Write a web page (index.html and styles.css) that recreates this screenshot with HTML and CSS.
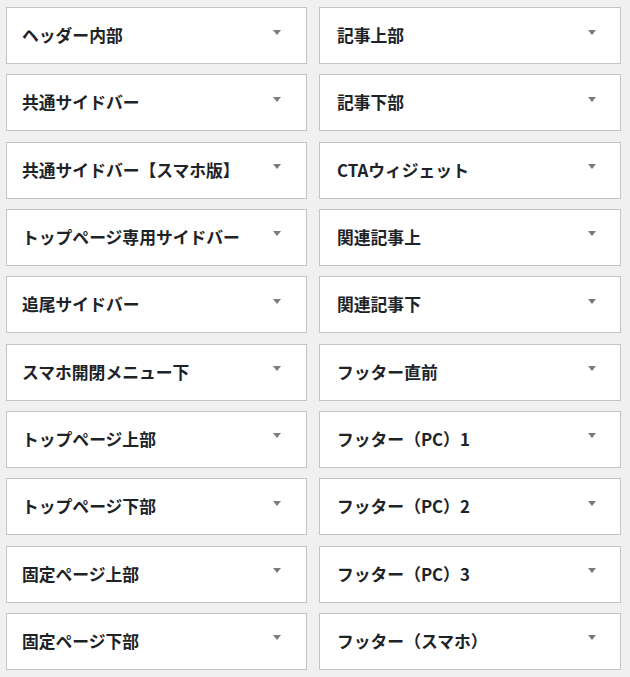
FILE: index.html
```html
<!DOCTYPE html>
<html lang="ja">
<head>
<meta charset="utf-8">
<link rel="stylesheet" href="styles.css">
</head>
<body>
<div class="grid">
  <div class="card"><span class="title">ヘッダー内部</span><span class="arrow"></span></div>
  <div class="card"><span class="title">記事上部</span><span class="arrow"></span></div>
  <div class="card"><span class="title">共通サイドバー</span><span class="arrow"></span></div>
  <div class="card"><span class="title">記事下部</span><span class="arrow"></span></div>
  <div class="card"><span class="title">共通サイドバー【スマホ版】</span><span class="arrow"></span></div>
  <div class="card"><span class="title">CTAウィジェット</span><span class="arrow"></span></div>
  <div class="card"><span class="title">トップページ専用サイドバー</span><span class="arrow"></span></div>
  <div class="card"><span class="title">関連記事上</span><span class="arrow"></span></div>
  <div class="card"><span class="title">追尾サイドバー</span><span class="arrow"></span></div>
  <div class="card"><span class="title">関連記事下</span><span class="arrow"></span></div>
  <div class="card"><span class="title">スマホ開閉メニュー下</span><span class="arrow"></span></div>
  <div class="card"><span class="title">フッター直前</span><span class="arrow"></span></div>
  <div class="card"><span class="title">トップページ上部</span><span class="arrow"></span></div>
  <div class="card"><span class="title">フッター（PC）1</span><span class="arrow"></span></div>
  <div class="card"><span class="title">トップページ下部</span><span class="arrow"></span></div>
  <div class="card"><span class="title">フッター（PC）2</span><span class="arrow"></span></div>
  <div class="card"><span class="title">固定ページ上部</span><span class="arrow"></span></div>
  <div class="card"><span class="title">フッター（PC）3</span><span class="arrow"></span></div>
  <div class="card"><span class="title">固定ページ下部</span><span class="arrow"></span></div>
  <div class="card"><span class="title">フッター（スマホ）</span><span class="arrow"></span></div>
</div>
</body>
</html>
```

FILE: styles.css
```css
html, body {
  margin: 0;
  padding: 0;
  background: #f0f0f1;
}
body {
  width: 630px;
  height: 677px;
  overflow: hidden;
  font-family: "Noto Sans CJK JP", "Noto Sans", sans-serif;
  color: #1d2327;
}
.grid {
  display: grid;
  grid-template-columns: 301px 302px;
  column-gap: 12px;
  row-gap: 10.33px;
  padding: 7px 0 0 6px;
}
.card {
  box-sizing: border-box;
  height: 57px;
  background: #fff;
  border: 1px solid #c3c4c7;
  display: flex;
  align-items: center;
  justify-content: space-between;
  padding: 0 25px 0 15px;
}
.card:nth-child(2n) {
  padding-left: 17px;
  padding-right: 24px;
}
.title {
  font-size: 16.8px;
  font-weight: 700;
  line-height: 1;
  white-space: nowrap;
}
.arrow {
  width: 0;
  height: 0;
  border-left: 4px solid transparent;
  border-right: 4px solid transparent;
  border-top: 5px solid #787c82;
  margin-bottom: 7px;
}
```
